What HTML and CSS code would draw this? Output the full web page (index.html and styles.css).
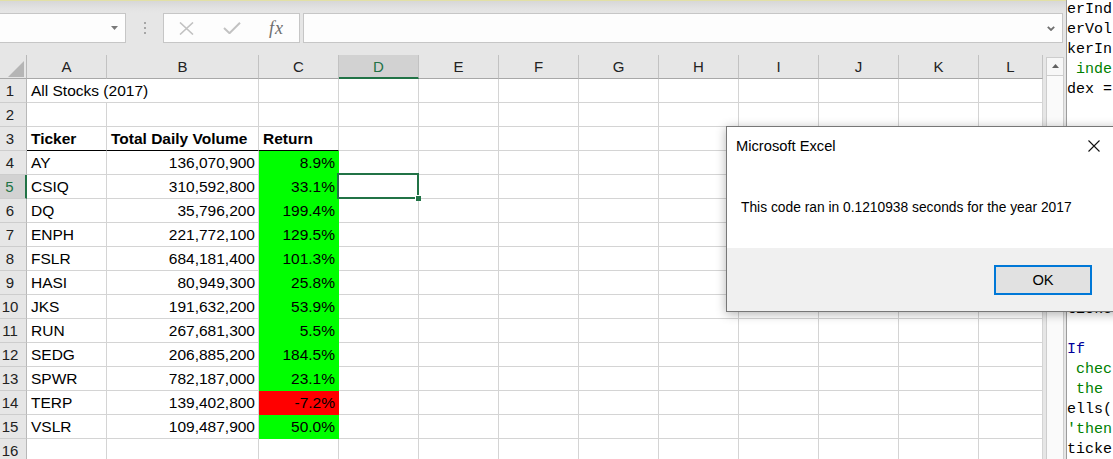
FILE: index.html
```html
<!DOCTYPE html>
<html lang="en">
<head>
<meta charset="utf-8">
<title>Excel - All Stocks (2017)</title>
<link rel="stylesheet" href="styles.css">
</head>
<body>
<div class="app">
  <div class="excel">
    <div class="topline"></div>
    <div class="fbar">
      <div class="namebox">
        <svg class="nb-arrow" width="7" height="4" viewBox="0 0 7 4"><path d="M0 0H7L3.5 4Z" fill="#7a7a7a"/></svg>
      </div>
      <div class="grip"><span></span><span></span><span></span></div>
      <div class="fxbox">
        <div class="slot"><svg width="15" height="13" viewBox="0 0 15 13"><path d="M1 0.5L14 12.5M14 0.5L1 12.5" stroke="#c2c2c2" stroke-width="1.6" fill="none"/></svg></div>
        <div class="slot"><svg width="18" height="12" viewBox="0 0 18 12"><path d="M1 6L6.5 11.2L17 0.8" stroke="#c2c2c2" stroke-width="2" fill="none"/></svg></div>
        <div class="slot"><span class="fx">fx</span></div>
      </div>
      <div class="finput">
        <svg width="8" height="5" viewBox="0 0 8 5"><path d="M0.8 0.8L4 4L7.2 0.8" stroke="#707070" stroke-width="1.8" fill="none"/></svg>
      </div>
    </div>
    <div class="sheetwrap">
      <div class="sheet">
        <div class="corner"><svg width="16" height="16" viewBox="0 0 16 16"><path d="M16 0V16H0Z" fill="#b5b5b5"/></svg></div>
        <div class="ch">A</div><div class="ch">B</div><div class="ch">C</div><div class="ch on">D</div><div class="ch">E</div><div class="ch">F</div><div class="ch">G</div><div class="ch">H</div><div class="ch">I</div><div class="ch">J</div><div class="ch">K</div><div class="ch">L</div>

        <div class="rh">1</div><div class="span2">All Stocks (2017)</div><div></div><div></div><div></div><div></div><div></div><div></div><div></div><div></div><div></div><div></div>

        <div class="rh">2</div><div></div><div></div><div></div><div></div><div></div><div></div><div></div><div></div><div></div><div></div><div></div><div></div>

        <div class="rh">3</div><div class="th">Ticker</div><div class="th">Total Daily Volume</div><div class="th">Return</div><div></div><div></div><div></div><div></div><div></div><div></div><div></div><div></div><div></div>

        <div class="rh">4</div><div>AY</div><div class="n">136,070,900</div><div class="n g">8.9%</div><div></div><div></div><div></div><div></div><div></div><div></div><div></div><div></div><div></div>

        <div class="rh on">5</div><div>CSIQ</div><div class="n">310,592,800</div><div class="n g">33.1%</div><div class="sel"><span class="selbox"><span class="handle"></span></span></div><div></div><div></div><div></div><div></div><div></div><div></div><div></div><div></div>

        <div class="rh">6</div><div>DQ</div><div class="n">35,796,200</div><div class="n g">199.4%</div><div></div><div></div><div></div><div></div><div></div><div></div><div></div><div></div><div></div>

        <div class="rh">7</div><div>ENPH</div><div class="n">221,772,100</div><div class="n g">129.5%</div><div></div><div></div><div></div><div></div><div></div><div></div><div></div><div></div><div></div>

        <div class="rh">8</div><div>FSLR</div><div class="n">684,181,400</div><div class="n g">101.3%</div><div></div><div></div><div></div><div></div><div></div><div></div><div></div><div></div><div></div>

        <div class="rh">9</div><div>HASI</div><div class="n">80,949,300</div><div class="n g">25.8%</div><div></div><div></div><div></div><div></div><div></div><div></div><div></div><div></div><div></div>

        <div class="rh">10</div><div>JKS</div><div class="n">191,632,200</div><div class="n g">53.9%</div><div></div><div></div><div></div><div></div><div></div><div></div><div></div><div></div><div></div>

        <div class="rh">11</div><div>RUN</div><div class="n">267,681,300</div><div class="n g">5.5%</div><div></div><div></div><div></div><div></div><div></div><div></div><div></div><div></div><div></div>

        <div class="rh">12</div><div>SEDG</div><div class="n">206,885,200</div><div class="n g">184.5%</div><div></div><div></div><div></div><div></div><div></div><div></div><div></div><div></div><div></div>

        <div class="rh">13</div><div>SPWR</div><div class="n">782,187,000</div><div class="n g">23.1%</div><div></div><div></div><div></div><div></div><div></div><div></div><div></div><div></div><div></div>

        <div class="rh">14</div><div>TERP</div><div class="n">139,402,800</div><div class="n r">-7.2%</div><div></div><div></div><div></div><div></div><div></div><div></div><div></div><div></div><div></div>

        <div class="rh">15</div><div>VSLR</div><div class="n">109,487,900</div><div class="n g">50.0%</div><div></div><div></div><div></div><div></div><div></div><div></div><div></div><div></div><div></div>

        <div class="rh">16</div><div></div><div></div><div></div><div></div><div></div><div></div><div></div><div></div><div></div><div></div><div></div><div></div>
      </div>
      <div class="vscroll">
        <div class="up"><svg width="7" height="4" viewBox="0 0 7 4"><path d="M0 4H7L3.5 0Z" fill="#606060"/></svg></div>
        <div class="track"></div>
      </div>
    </div>
  </div>
  <div class="code">
<div class="ln">erInd</div>
<div class="ln">erVol</div>
<div class="ln">kerIn</div>
<div class="ln cm"> inde</div>
<div class="ln">dex =</div>
<div class="ln"> </div>
<div class="ln"> </div>
<div class="ln"> </div>
<div class="ln"> </div>
<div class="ln"> </div>
<div class="ln"> </div>
<div class="ln"> </div>
<div class="ln"> </div>
<div class="ln"> </div>
<div class="ln"> </div>
<div class="ln">ticke</div>
<div class="ln"> </div>
<div class="ln kw">If</div>
<div class="ln cm"> chec</div>
<div class="ln cm"> the</div>
<div class="ln">ells(</div>
<div class="ln cm">'then</div>
<div class="ln">ticke</div>
  </div>
</div>

<div class="dialog">
  <div class="dtitle">
    <span>Microsoft Excel</span>
    <svg class="dclose" width="12" height="12" viewBox="0 0 12 12"><path d="M0.5 0.5L11.5 11.5M11.5 0.5L0.5 11.5" stroke="#111" stroke-width="1.1" fill="none"/></svg>
  </div>
  <div class="dmsg">This code ran in 0.1210938 seconds for the year 2017</div>
  <div class="dfoot"><button class="ok" type="button">OK</button></div>
</div>
</body>
</html>
```

FILE: styles.css
```css
* { box-sizing: border-box; }

html, body {
  margin: 0;
  padding: 0;
}

body {
  width: 1113px;
  height: 459px;
  overflow: hidden;
  position: relative;
  background: #e6e6e6;
  font-family: "Liberation Sans", Arial, sans-serif;
  color: #000;
}

.app {
  display: flex;
  height: 459px;
}

.excel {
  width: 1066px;
  flex: none;
  display: flex;
  flex-direction: column;
}

.topline {
  height: 1px;
  background: #e2e0a6;
  flex: none;
}

.fbar {
  height: 54px;
  flex: none;
  display: flex;
  align-items: flex-start;
  padding-top: 12px;
  background: linear-gradient(to bottom, #d7d7d7 0, #e3e3e3 8px, #e6e6e6 12px);
}

.namebox {
  width: 127px;
  height: 30px;
  margin-left: -1px;
  background: #fdfdfd;
  border: 1px solid #c6c6c6;
  display: flex;
  align-items: center;
  justify-content: flex-end;
  padding-right: 7px;
}

.grip {
  width: 37px;
  height: 30px;
  display: flex;
  flex-direction: column;
  align-items: center;
  padding-top: 9px;
  padding-left: 1px;
  gap: 3px;
}

.grip span {
  width: 2px;
  height: 2px;
  background: #a6a6a6;
}

.fxbox {
  width: 137px;
  height: 30px;
  background: #fdfdfd;
  border: 1px solid #c6c6c6;
  display: flex;
}

.slot {
  width: 45px;
  display: flex;
  align-items: center;
  justify-content: center;
}

.fx {
  font-family: "Liberation Serif", "DejaVu Serif", serif;
  font-style: italic;
  font-size: 18px;
  letter-spacing: 1px;
  color: #6e6e6e;
  line-height: 20px;
  margin-top: -1px;
}

.finput {
  width: 760px;
  height: 30px;
  margin-left: 3px;
  background: #fdfdfd;
  border: 1px solid #c6c6c6;
  display: flex;
  align-items: center;
  justify-content: flex-end;
  padding-right: 7px;
}

.sheetwrap {
  flex: 1;
  min-height: 0;
  display: flex;
}

.sheet {
  width: 1043px;
  flex: none;
  display: grid;
  grid-template-columns: 27px 80px 152px repeat(9, 80px) 64px;
  grid-auto-rows: 24px;
  align-content: start;
}

.sheet > div {
  background: #fff;
  border-right: 1px solid #d4d4d4;
  border-bottom: 1px solid #d4d4d4;
  font-size: 15.5px;
  line-height: 24px;
  padding: 0 4px;
  white-space: nowrap;
}

.sheet > .corner {
  background: #e6e6e6;
  border-right-color: #b8b8b8;
  border-bottom-color: #a8a8a8;
  display: flex;
  justify-content: flex-end;
  align-items: flex-end;
  padding: 0 2px 1px 0;
}

.sheet > .ch {
  background: #e6e6e6;
  border-right-color: #c2c2c2;
  border-bottom-color: #a8a8a8;
  text-align: center;
  font-size: 15px;
  color: #222;
}

.sheet > .ch.on {
  background: #d2d2d2;
  border-bottom: 2px solid #217346;
  color: #217346;
  line-height: 23px;
}

.sheet > .rh {
  background: #e6e6e6;
  border-right-color: #b8b8b8;
  border-bottom-color: #cdcdcd;
  font-size: 15px;
  color: #222;
  text-align: center;
  padding: 0 6px 0 0;
}

.sheet > .rh.on {
  background: #d2d2d2;
  border-right: 2px solid #217346;
  color: #217346;
}

.sheet > .span2 {
  grid-column: span 2;
}

.sheet > .th {
  font-weight: bold;
  border-bottom-color: #000;
}

.sheet > .n {
  text-align: right;
  padding-right: 3px;
}

.sheet > .g {
  background: #00ff00;
  border-right-color: #00ff00;
  border-bottom-color: #00ff00;
}

.sheet > .r {
  background: #ff0000;
  border-right-color: #ff0000;
  border-bottom-color: #ff0000;
}

.sheet > .sel {
  position: relative;
}

.selbox {
  position: absolute;
  left: -2px;
  top: -2px;
  right: -1px;
  bottom: -1px;
  border: 2px solid #217346;
}

.handle {
  position: absolute;
  right: -4px;
  bottom: -4px;
  width: 6px;
  height: 6px;
  background: #217346;
  border-left: 1px solid #fff;
  border-top: 1px solid #fff;
}

.vscroll {
  width: 18px;
  margin-left: 3px;
  margin-top: 2px;
  flex: none;
  display: flex;
  flex-direction: column;
  background: #fafafa;
  border-left: 1px solid #cdcdcd;
  border-right: 1px solid #cdcdcd;
}

.up {
  height: 19px;
  border-top: 1px solid #cdcdcd;
  border-bottom: 1px solid #cdcdcd;
  background: #f7f7f7;
  display: flex;
  align-items: center;
  justify-content: center;
  padding-bottom: 1px;
}

.track {
  flex: 1;
}

.code {
  flex: 1;
  min-width: 0;
  background: #fff;
  border-left: 1px solid #9c9c9c;
  font-family: "Liberation Mono", "Courier New", monospace;
  font-size: 15px;
  line-height: 20px;
  overflow: hidden;
  color: #000;
}

.ln {
  white-space: pre;
  height: 20px;
}

.ln.cm { color: #008000; }
.ln.kw { color: #00009a; }

.dialog {
  position: absolute;
  left: 726px;
  top: 126px;
  width: 400px;
  height: 186px;
  background: #fff;
  border: 1px solid #777;
  box-shadow: 0 2px 10px rgba(0, 0, 0, 0.3);
  display: flex;
  flex-direction: column;
}

.dtitle {
  display: flex;
  align-items: flex-start;
  justify-content: space-between;
  padding: 9px 25px 0 9px;
  font-size: 14.7px;
  line-height: 20px;
  color: #000;
}

.dclose {
  margin-top: 4px;
}

.dmsg {
  margin-top: 42px;
  padding-left: 14px;
  font-size: 13.8px;
  line-height: 20px;
  color: #000;
}

.dfoot {
  margin-top: auto;
  height: 63px;
  background: #f0f0f0;
  padding: 17px 0 0 267px;
}

.ok {
  width: 98px;
  height: 30px;
  padding: 0;
  margin: 0;
  background: #e1e1e1;
  border: 2px solid #0078d7;
  font-family: "Liberation Sans", Arial, sans-serif;
  font-size: 14.7px;
  line-height: 26px;
  color: #000;
}
```
